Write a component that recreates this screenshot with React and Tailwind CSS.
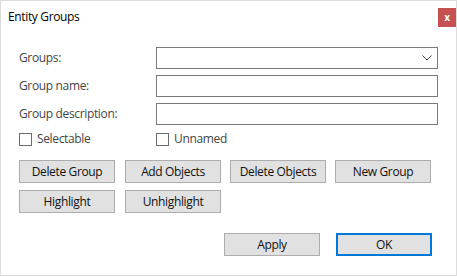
import React from 'react';

const Field = ({ label, children }) => (
    <div className="flex items-center h-[22px]">
        <span className="w-[137px] text-[#444]">{label}</span>
        {children}
    </div>
);

const Box = ({ select }) => (
    <div className="relative w-[282px] h-[22px] border border-[#7a7a7a] bg-white">
        {select && (
            <svg className="absolute right-[5px] top-[7px]" width="10" height="6" viewBox="0 0 10 6">
                <path d="M0.5 0.5 L5 5 L9.5 0.5" fill="none" stroke="#444" strokeWidth="1" />
            </svg>
        )}
    </div>
);

const Check = ({ label }) => (
    <div className="flex items-center gap-[5px]">
        <span className="w-[13px] h-[13px] border border-[#6b6b6b] bg-white" />
        <span className="text-[#444]">{label}</span>
    </div>
);

const Btn = ({ children, primary, className = '' }) => (
    <button
        className={
            'w-[96px] h-[23px] bg-[#e1e1e1] text-[#111] flex items-center justify-center ' +
            (primary ? 'border-2 border-[#0078d7] ' : 'border border-[#adadad] ') +
            className
        }
    >
        {children}
    </button>
);

export default function App() {
    return (
        <div className="w-[457px] h-[276px] bg-white border border-[#dcdcdc] font-['Open_Sans',sans-serif] text-[12px] tracking-[-0.35px] leading-none flex flex-col">
            {/* title bar */}
            <div className="h-[33px] flex items-start justify-between pl-[7px]">
                <span className="mt-[10px] text-black">Entity Groups</span>
                <div className="mt-[7px] w-[18px] h-[19px] bg-[#c75050] flex items-center justify-center">
                    <span className="text-white font-bold text-[10px] leading-none -mt-px">x</span>
                </div>
            </div>

            <div className="pl-[18px] mt-[13px] flex flex-col">
                <div className="flex flex-col gap-[6px]">
                    <Field label="Groups:"><Box select /></Field>
                    <Field label="Group name:"><Box /></Field>
                    <Field label="Group description:"><Box /></Field>
                </div>

                <div className="flex items-center h-[22px] mt-[3px]">
                    <div className="w-[137px]"><Check label="Selectable" /></div>
                    <Check label="Unnamed" />
                </div>

                <div className="flex gap-[9px] mt-[10px]">
                    <Btn className="mr-px">Delete Group</Btn>
                    <Btn>Add Objects</Btn>
                    <Btn>Delete Objects</Btn>
                    <Btn>New Group</Btn>
                </div>
                <div className="flex gap-[9px] mt-[7px]">
                    <Btn className="mr-px">Highlight</Btn>
                    <Btn>Unhighlight</Btn>
                </div>

                <div className="flex justify-end gap-[16px] mt-[20px] pr-[24px]">
                    <Btn>Apply</Btn>
                    <Btn primary>OK</Btn>
                </div>
            </div>
        </div>
    );
}
